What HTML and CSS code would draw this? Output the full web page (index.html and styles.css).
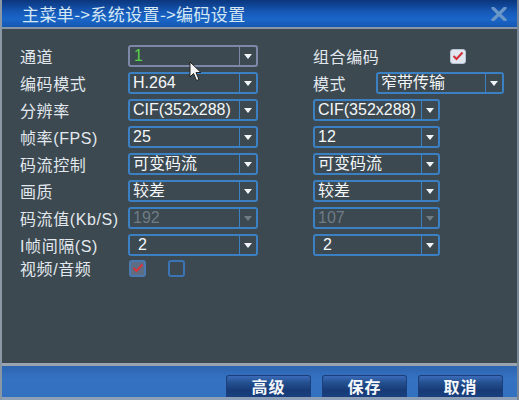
FILE: index.html
```html
<!DOCTYPE html>
<html lang="zh-CN">
<head>
<meta charset="utf-8">
<title>编码设置</title>
<link rel="stylesheet" href="styles.css">
</head>
<body>
<div class="dialog">
  <div class="titlebar">
    <span class="title">主菜单-&gt;系统设置-&gt;编码设置</span>
    <svg class="close" width="16" height="14" viewBox="0 0 16 14"><path d="M2 1 L14 13 M14 1 L2 13" stroke="#6a96c8" stroke-width="3.2" stroke-linecap="round"/></svg>
  </div>
  <div class="content">
    <div class="row">
      <span class="label">通道</span>
      <div class="select focus"><span class="val green">1</span><span class="arrow"></span></div>
      <div class="right">
        <span class="label rlabel-wide">组合编码</span>
        <span class="check light"><svg width="12" height="10" viewBox="0 0 12 10"><path d="M1.5 5 L4.5 8 L10.5 1.5" fill="none" stroke="#d0303a" stroke-width="2"/></svg></span>
      </div>
    </div>
    <div class="row">
      <span class="label">编码模式</span>
      <div class="select"><span class="val">H.264</span><span class="arrow"></span></div>
      <div class="right">
        <span class="label rlabel">模式</span>
        <div class="select wide"><span class="val">窄带传输</span><span class="arrow"></span></div>
      </div>
    </div>
    <div class="row">
      <span class="label">分辨率</span>
      <div class="select"><span class="val">CIF(352x288)</span><span class="arrow"></span></div>
      <div class="right"><div class="select narrow"><span class="val">CIF(352x288)</span><span class="arrow"></span></div></div>
    </div>
    <div class="row">
      <span class="label">帧率(FPS)</span>
      <div class="select"><span class="val">25</span><span class="arrow"></span></div>
      <div class="right"><div class="select narrow"><span class="val">12</span><span class="arrow"></span></div></div>
    </div>
    <div class="row">
      <span class="label">码流控制</span>
      <div class="select"><span class="val">可变码流</span><span class="arrow"></span></div>
      <div class="right"><div class="select narrow"><span class="val">可变码流</span><span class="arrow"></span></div></div>
    </div>
    <div class="row">
      <span class="label">画质</span>
      <div class="select"><span class="val">较差</span><span class="arrow"></span></div>
      <div class="right"><div class="select narrow"><span class="val">较差</span><span class="arrow"></span></div></div>
    </div>
    <div class="row">
      <span class="label">码流值(Kb/S)</span>
      <div class="select disabled"><span class="val">192</span><span class="arrow"></span></div>
      <div class="right"><div class="select narrow disabled"><span class="val">107</span><span class="arrow"></span></div></div>
    </div>
    <div class="row">
      <span class="label">I帧间隔(S)</span>
      <div class="select"><span class="val indent">2</span><span class="arrow"></span></div>
      <div class="right"><div class="select narrow"><span class="val indent">2</span><span class="arrow"></span></div></div>
    </div>
    <div class="row short">
      <span class="label">视频/音频</span>
      <div class="checks">
        <span class="check on"><svg width="12" height="10" viewBox="0 0 12 10"><path d="M1.5 5 L4.5 8 L10.5 1.5" fill="none" stroke="#d8343a" stroke-width="2"/></svg></span>
        <span class="check"></span>
      </div>
    </div>
    <svg class="cursor" width="14" height="22" viewBox="0 0 14 22"><path d="M1 1 L1 16 L4.5 12.5 L7.5 19.5 L10 18.5 L7 11.5 L12 11.5 Z" fill="#f4f4f4" stroke="#222" stroke-width="1"/></svg>
  </div>
  <div class="footer">
    <button class="btn">高级</button>
    <button class="btn">保存</button>
    <button class="btn">取消</button>
  </div>
</div>
</body>
</html>
```

FILE: styles.css
```css
html, body {
  margin: 0;
  padding: 0;
  background: #2b353c;
}
body {
  font-family: "Liberation Sans", "Noto Sans CJK SC", sans-serif;
  width: 519px;
  height: 400px;
  overflow: hidden;
}
.dialog {
  width: 515px;
  height: 400px;
  display: flex;
  flex-direction: column;
  border-left: 2px solid #8a98a6;
  border-right: 2px solid #7a8896;
  background: #3c4950;
}
.titlebar {
  height: 27px;
  flex: none;
  display: flex;
  align-items: center;
  justify-content: space-between;
  padding: 0 10px 0 20px;
  background: linear-gradient(180deg, #0b367c 0%, #1659b8 45%, #1a66c8 70%, #1558b2 100%);
  border-bottom: 2px solid #8796a6;
}
.title {
  color: #d4e8f4;
  font-size: 17px;
  line-height: 27px;
  font-family: "Noto Sans CJK SC", "Liberation Sans", sans-serif;
  letter-spacing: 0.4px;
}
.close {
  display: block;
  margin-top: 1px;
}
.content {
  flex: 1;
  position: relative;
  padding: 16px 0 0 18px;
  display: flex;
  flex-direction: column;
  gap: 5px;
}
.row {
  display: flex;
  align-items: center;
  height: 22px;
}
.row.short {
  height: 14px;
}
.label {
  width: 108px;
  flex: none;
  color: #e2e8ee;
  font-size: 16px;
  letter-spacing: 0.6px;
  white-space: nowrap;
}
.right {
  margin-left: 55px;
  display: flex;
  align-items: center;
}
.rlabel-wide { width: 137px; }
.rlabel { width: 63px; }
.select {
  width: 130px;
  height: 22px;
  box-sizing: border-box;
  border: 2px solid #3a80c2;
  border-radius: 3px;
  display: flex;
  align-items: center;
  flex: none;
}
.select.focus {
  border-color: #7d87a8;
}
.select.wide { width: 128px; }
.select.narrow { width: 127px; }
.val {
  flex: 1;
  color: #f4f7fa;
  font-size: 16px;
  padding-left: 3px;
  white-space: nowrap;
  overflow: hidden;
  line-height: 18px;
}
.val.green { color: #58d048; padding-left: 4px; }
.val.indent { padding-left: 8px; }
.arrow {
  width: 16px;
  height: 100%;
  border-left: 1px solid #3a80c2;
  display: flex;
  align-items: center;
  justify-content: center;
  flex: none;
}
.focus .arrow { border-left-color: #7d87a8; }
.arrow::after {
  content: "";
  width: 0;
  height: 0;
  border-left: 4px solid transparent;
  border-right: 4px solid transparent;
  border-top: 5px solid #f2f5f8;
}
.disabled .val { color: #6f7c86; }
.disabled .arrow::after { border-top-color: #6f7c86; }
.checks {
  display: flex;
  gap: 22px;
  margin-left: 1px;
}
.check {
  width: 17px;
  height: 17px;
  box-sizing: border-box;
  border: 2px solid #3a74b4;
  border-radius: 3px;
  display: flex;
  align-items: center;
  justify-content: center;
  flex: none;
}
.check.on {
  background: #5d6e84;
  border-color: #4a78b0;
}
.check.light {
  background: #e2e6ee;
  border: 1px solid #b8c4d4;
  width: 16px;
  height: 15px;
}
.cursor {
  position: absolute;
  left: 187px;
  top: 32px;
}
.footer {
  flex: none;
  height: 31px;
  border-top: 3px solid #9aa4ae;
  border-bottom: 3px solid #8ea0b8;
  background: linear-gradient(180deg, #2c64b0 0%, #3672c2 40%, #3270c0 100%);
  display: flex;
  justify-content: flex-end;
  align-items: flex-end;
  gap: 11px;
  padding-right: 14px;
}
.btn {
  width: 85px;
  height: 22px;
  border: none;
  border-radius: 3px 3px 0 0;
  background: linear-gradient(180deg, #3f70c0 0%, #24508f 35%, #173a76 70%, #1a4080 100%);
  box-shadow: inset 0 0 0 1px #1c3e7a;
  color: #f4f7fb;
  font-family: "Noto Sans CJK SC", sans-serif;
  font-size: 16px;
  font-weight: bold;
  letter-spacing: 1px;
  padding: 0;
  line-height: 22px;
}
```
